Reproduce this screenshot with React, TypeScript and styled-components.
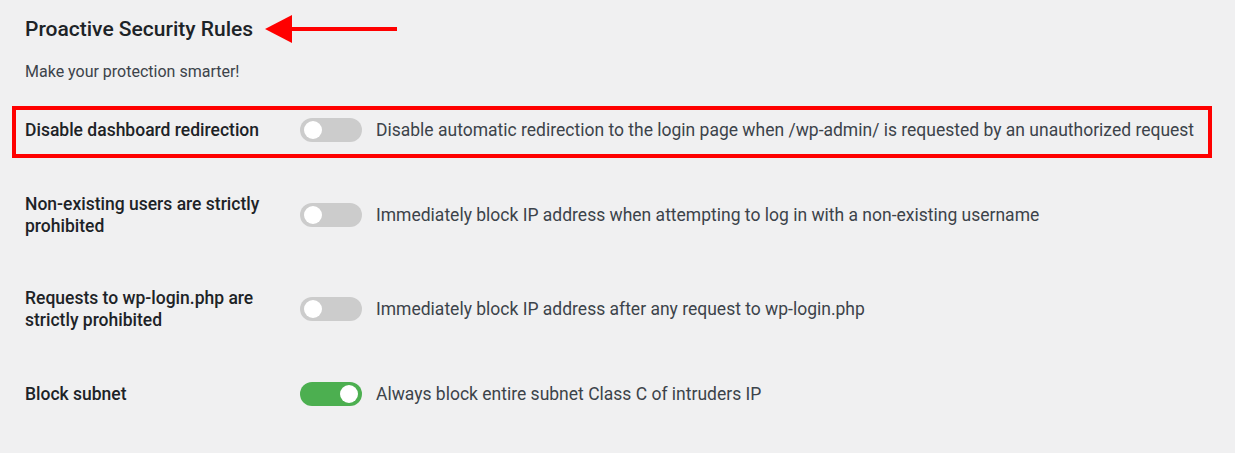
import React, { useState } from 'react';
import styled, { createGlobalStyle } from 'styled-components';

const GlobalStyle = createGlobalStyle`
  html, body {
    margin: 0;
    padding: 0;
    background: #F0F0F1;
  }
  body {
    font-family: Roboto, "Noto Sans", "Liberation Sans", sans-serif;
    color: #1D2327;
  }
`;

const Page = styled.div`
  padding: 14px 23px 40px 25px;
`;

const Header = styled.div`
  display: flex;
  align-items: center;
  gap: 12px;
`;

const Title = styled.h2`
  margin: 0;
  font-size: 21px;
  line-height: 30px;
  font-weight: 500;
  color: #1D2327;
`;

const Subtitle = styled.p`
  margin: 18px 0 11px;
  font-size: 16px;
  line-height: 20px;
  color: #3C434A;
`;

const RuleList = styled.div`
  display: flex;
  flex-direction: column;
`;

interface RowProps {
  $highlight?: boolean;
}

const RuleRow = styled.div<RowProps>`
  position: relative;
  display: flex;
  align-items: center;
  padding: 25px 0 25.5px;
  ${(p: RowProps) => p.$highlight && `
    &::before {
      content: '';
      position: absolute;
      top: 13px;
      bottom: 9.5px;
      left: -13px;
      right: 0;
      border: 4px solid #FF0000;
      pointer-events: none;
    }
  `}
`;

const RuleLabel = styled.div`
  width: 265px;
  margin-right: 10px;
  font-size: 17.5px;
  line-height: 22px;
  font-weight: 500;
  color: #1D2327;
`;

const RuleDescription = styled.div`
  font-size: 17.5px;
  line-height: 22px;
  color: #3C434A;
`;

interface SwitchProps {
  $on: boolean;
}

const Switch = styled.button<SwitchProps>`
  position: relative;
  flex-shrink: 0;
  width: 62px;
  height: 24px;
  margin-right: 14px;
  padding: 0;
  border: none;
  border-radius: 12px;
  cursor: pointer;
  background: ${(p: SwitchProps) => (p.$on ? '#4CAF50' : '#CCCCCC')};
  &::after {
    content: '';
    position: absolute;
    top: 3px;
    left: ${(p: SwitchProps) => (p.$on ? '40px' : '4px')};
    width: 18px;
    height: 18px;
    border-radius: 50%;
    background: #FFFFFF;
  }
`;

const Arrow = () => (
  <svg width="132" height="30" viewBox="0 0 132 30">
    <polygon points="0,15 27,1 27,29" fill="#FF0000" />
    <rect x="25" y="13" width="107" height="4" fill="#FF0000" />
  </svg>
);

const rules = [
  {
    id: 'redirect',
    label: 'Disable dashboard redirection',
    description: 'Disable automatic redirection to the login page when /wp-admin/ is requested by an unauthorized request',
    on: false,
    highlight: true,
  },
  {
    id: 'nonexisting',
    label: 'Non-existing users are strictly prohibited',
    description: 'Immediately block IP address when attempting to log in with a non-existing username',
    on: false,
  },
  {
    id: 'wplogin',
    label: 'Requests to wp-login.php are strictly prohibited',
    description: 'Immediately block IP address after any request to wp-login.php',
    on: false,
  },
  {
    id: 'subnet',
    label: 'Block subnet',
    description: 'Always block entire subnet Class C of intruders IP',
    on: true,
  },
];

export default function App() {
  const [state, setState] = useState<Record<string, boolean>>(
    Object.fromEntries(rules.map((r) => [r.id, r.on]))
  );

  return (
    <>
      <GlobalStyle />
      <Page>
        <Header>
          <Title>Proactive Security Rules</Title>
          <Arrow />
        </Header>
        <Subtitle>Make your protection smarter!</Subtitle>
        <RuleList>
          {rules.map((r) => (
            <RuleRow key={r.id} $highlight={r.highlight}>
              <RuleLabel>{r.label}</RuleLabel>
              <Switch
                $on={state[r.id]}
                aria-label={r.label}
                onClick={() => setState({ ...state, [r.id]: !state[r.id] })}
              />
              <RuleDescription>{r.description}</RuleDescription>
            </RuleRow>
          ))}
        </RuleList>
      </Page>
    </>
  );
}
